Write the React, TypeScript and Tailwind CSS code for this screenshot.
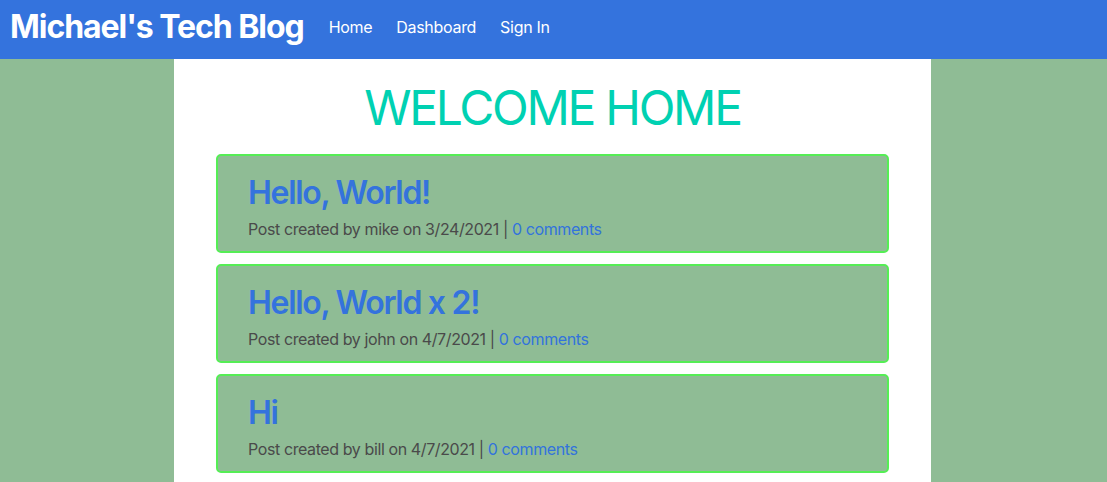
const posts = [
  { title: "Hello, World!", author: "mike", date: "3/24/2021" },
  { title: "Hello, World x 2!", author: "john", date: "4/7/2021" },
  { title: "Hi", author: "bill", date: "4/7/2021" },
];

export default function App() {
  return (
    <div className="min-h-[482px] bg-[#8fbc95] font-['Inter',sans-serif]">
      {/* Navbar */}
      <nav className="h-[59px] bg-[#3473dd] flex items-center px-[10px] pb-[5px]">
        <a className="text-[32px] font-bold text-white tracking-[-1.05px] mr-[25px]">
          Michael's Tech Blog
        </a>
        <div className="flex items-center gap-[24px] text-white text-[16px] tracking-[-0.3px]">
          <a>Home</a>
          <a>Dashboard</a>
          <a>Sign In</a>
        </div>
      </nav>

      <main className="w-[757px] ml-[174px] bg-white pt-[20px] pb-[10px] min-h-[423px]">
        <h1 className="text-center text-[48px] text-[#00d1b2] leading-[1.2] tracking-[-2.3px] mb-[17px]">
          WELCOME HOME
        </h1>
        <div className="flex flex-col gap-[11px] px-[42px]">
          {posts.map((p) => (
            <div
              key={p.title}
              className="h-[99px] border-2 border-[#55ee55] rounded-[5px] bg-[#8fbc95] px-[30px] pt-[18px]"
            >
              <h2 className="text-[32px] font-semibold text-[#3473dd] leading-[1.2] tracking-[-1.3px]">
                {p.title}
              </h2>
              <p className="text-[16px] text-[#4a4a4a] mt-[5px] tracking-[-0.4px]">
                Post created by {p.author} on {p.date} |{" "}
                <a className="text-[#3273dc]">0 comments</a>
              </p>
            </div>
          ))}
        </div>
      </main>
    </div>
  );
}
